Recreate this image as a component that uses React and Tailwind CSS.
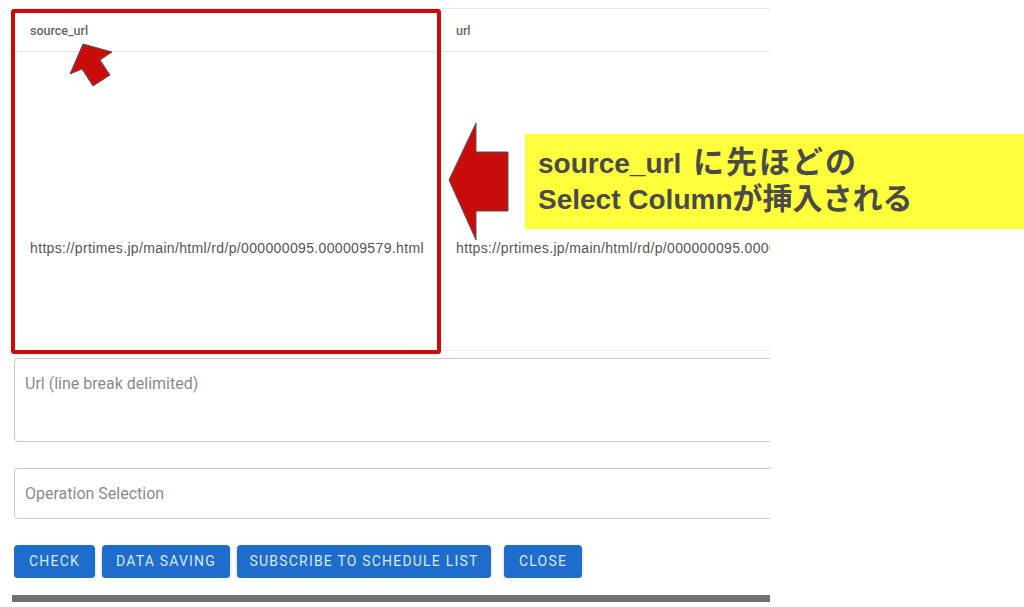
import React from "react";

const url = "https://prtimes.jp/main/html/rd/p/000000095.000009579.html";

export default function App() {
  return (
    <div className="relative w-[1024px] h-[607px] bg-white overflow-hidden" style={{ fontFamily: "Roboto, 'Liberation Sans', sans-serif" }}>
      <div className="w-[756px] ml-[14px] overflow-hidden">
        {/* table */}
        <div className="mt-[8px] border-t border-[#e6e6e6]">
          <div className="flex h-[43px] border-b border-[#e6e6e6]">
            <div className="w-[429px] shrink-0 pl-[16px] pt-[2px] flex items-center text-[12.5px] font-medium text-[#666]">source_url</div>
            <div className="flex-1 pl-[13px] pt-[2px] flex items-center text-[12.5px] font-medium text-[#666]">url</div>
          </div>
          <div className="flex h-[299px] border-b border-[#ececec] text-[14px] tracking-[0.35px] text-[#555] whitespace-nowrap" style={{ fontFamily: "'Liberation Sans', Arial, sans-serif" }}>
            <div className="w-[429px] shrink-0 pl-[16px] pt-[186px]">{url}</div>
            <div className="flex-1 pl-[13px] pt-[186px] overflow-hidden">{url}</div>
          </div>
        </div>
        {/* url textarea */}
        <div className="mt-[7px] h-[84px] w-[780px] border border-[#c9c9c9] rounded-[4px] px-[10px] pt-[13px] text-[16px] text-[#8a8a8a]">
          Url (line break delimited)
        </div>
        {/* operation */}
        <div className="mt-[26px] h-[51px] w-[780px] border border-[#c9c9c9] rounded-[4px] px-[10px] flex items-center text-[16px] text-[#8a8a8a]">
          Operation Selection
        </div>
        {/* buttons */}
        <div className="mt-[26px] flex items-center">
          {[
            ["CHECK", "w-[81px]", "ml-0"],
            ["DATA SAVING", "w-[128px]", "ml-[7px]"],
            ["SUBSCRIBE TO SCHEDULE LIST", "w-[254px]", "ml-[7px]"],
            ["CLOSE", "w-[78px]", "ml-[13px]"],
          ].map(([t, w, m]) => (
            <div
              key={t}
              className={`${w} ${m} h-[33px] rounded-[4px] bg-[#1e6dcc] text-[#dbe8f7] text-[14px] tracking-[1.2px] flex items-center justify-center shadow-[0_2px_3px_rgba(0,0,0,0.25)]`}
            >
              {t}
            </div>
          ))}
        </div>
      </div>
      {/* bottom bar */}
      <div className="ml-[12px] mt-[17px] w-[758px] h-[7px] bg-[#707070]" />

      {/* red highlight box */}
      <div className="absolute left-[11px] top-[9px] w-[430px] h-[345px] border-[4px] border-[#cc0a0a] rounded-[3px]" />

      {/* arrows */}
      <svg className="absolute left-0 top-0" width="1024" height="607" viewBox="0 0 1024 607" style={{ pointerEvents: "none" }}>
        <polygon
          points="83,44 112,52 100,60 110,75 93,86 82,69 70,74"
          fill="#c80c0c"
          stroke="#555"
          strokeWidth="1"
        />
        <polygon
          points="449,180 476,123 476,152 508,152 508,211 476,211 476,240"
          fill="#c80c0c"
          stroke="#555"
          strokeWidth="1"
        />
      </svg>

      {/* yellow callout */}
      <div
        className="absolute left-[525px] top-[134px] w-[499px] h-[95px] bg-[#ffff3c] pl-[13px] pt-[11px] text-[28px] font-bold leading-[35px] text-[#4a4a4a] whitespace-nowrap"
        style={{ fontFamily: "'Liberation Sans', 'Noto Sans CJK JP', sans-serif" }}
      >
        <div>source_url <span className="ml-[4px] text-[31px] tracking-[2px]">に先ほどの</span></div>
        <div>Select Column<span className="text-[30px]">が挿入される</span></div>
      </div>
    </div>
  );
}
